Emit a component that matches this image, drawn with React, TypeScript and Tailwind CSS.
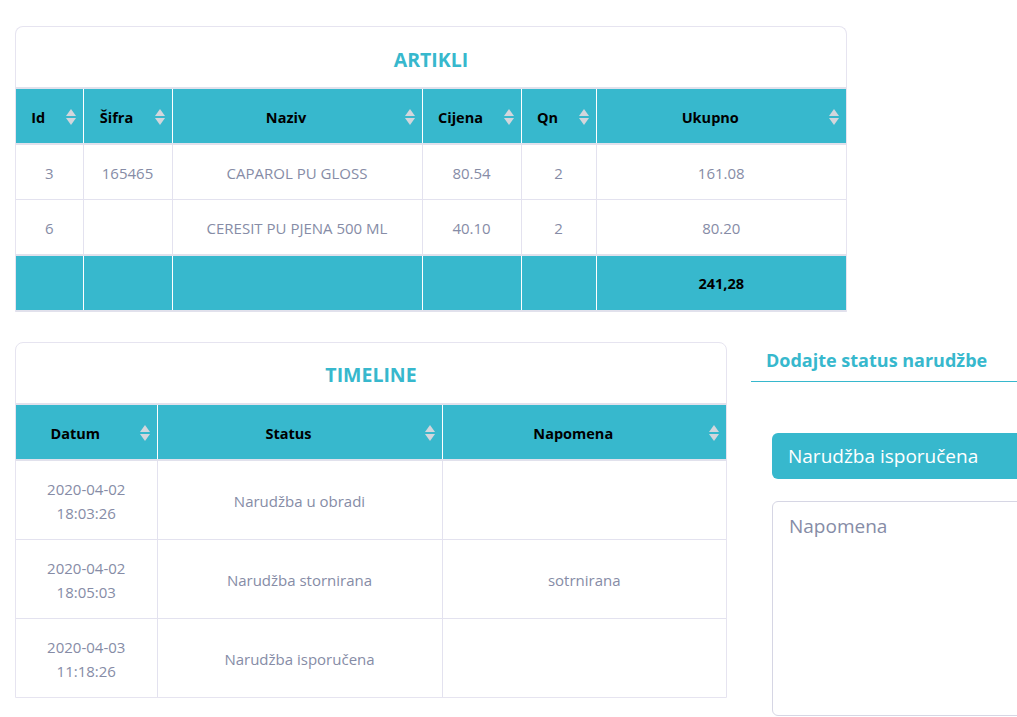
import React from "react";

const TEAL = "bg-[#37b8cd]";

function SortIcon() {
  return (
    <svg width="10" height="16" viewBox="0 0 10 16" className="shrink-0">
      <polygon points="5,0 10,7 0,7" fill="#d3d6dc" />
      <polygon points="0,9 10,9 5,16" fill="#d3d6dc" />
    </svg>
  );
}

function Th({ label, w }: { label: string; w: string }) {
  return (
    <th className={`${w} relative border-r border-white last:border-r-0 p-0 font-bold text-black text-[14.5px]`}>
      <div className="flex items-center h-[54px] pt-[3px] pl-[8px] pr-[30px]">
        <span className="flex-1 text-center">{label}</span>
      </div>
      <div className="absolute right-[7px] top-[20px]">
        <SortIcon />
      </div>
    </th>
  );
}

function Td({ children, last, h }: { children?: React.ReactNode; last?: boolean; h: string }) {
  return (
    <td className={`border-r border-[#e3e2ef] ${last ? "border-r-0" : ""} p-0 text-[15px] text-[#868ca6]`}>
      <div className={`${h} flex items-center justify-center text-center px-2 pt-[1px] leading-[24px]`}>
        <div>{children}</div>
      </div>
    </td>
  );
}

function Tf({ children, last }: { children?: React.ReactNode; last?: boolean }) {
  return (
    <td className={`${last ? "" : "border-r border-white"} p-0`}>
      <div className="h-[54px] pt-[2px] flex items-center justify-center font-bold text-[14.5px] text-black">
        {children}
      </div>
    </td>
  );
}

export default function App() {
  const font = { fontFamily: '"Open Sans", "Noto Sans", sans-serif' };
  const a = "h-[54px]";
  const t = "h-[78px]";
  return (
    <div className="w-[1017px] h-[717px] overflow-hidden bg-white" style={font}>
      <div className="w-[1100px] pl-[15px] pt-[26px]">
        {/* ARTIKLI */}
        <div className="w-[832px] border border-[#e6e4f0] border-b-0 rounded-t-[8px]">
          <div className="h-[60px] pt-[5px] flex items-center justify-center text-[19.5px] font-bold text-[#37b8cd]">
            ARTIKLI
          </div>
          <table className="w-full border-collapse table-fixed">
            <thead>
              <tr className={`${TEAL} border-t-2 border-b-2 border-[#e1e1ec]`}>
                <Th label="Id" w="w-[67px]" />
                <Th label="Šifra" w="w-[89px]" />
                <Th label="Naziv" w="w-[250px]" />
                <Th label="Cijena" w="w-[99px]" />
                <Th label="Qn" w="w-[75px]" />
                <Th label="Ukupno" w="" />
              </tr>
            </thead>
            <tbody>
              <tr className="border-b border-[#e3e2ef]">
                <Td h={a}>3</Td>
                <Td h={a}>165465</Td>
                <Td h={a}>CAPAROL PU GLOSS</Td>
                <Td h={a}>80.54</Td>
                <Td h={a}>2</Td>
                <Td h={a} last>161.08</Td>
              </tr>
              <tr>
                <Td h={a}>6</Td>
                <Td h={a}></Td>
                <Td h={a}>CERESIT PU PJENA 500 ML</Td>
                <Td h={a}>40.10</Td>
                <Td h={a}>2</Td>
                <Td h={a} last>80.20</Td>
              </tr>
              <tr className={`${TEAL} border-t-2 border-b-2 border-[#e1e1ec]`}>
                <Tf />
                <Tf />
                <Tf />
                <Tf />
                <Tf />
                <Tf last>241,28</Tf>
              </tr>
            </tbody>
          </table>
        </div>

        <div className="flex mt-[30px]">
          {/* TIMELINE */}
          <div className="w-[712px] shrink-0">
            <div className="border border-[#e6e4f0] rounded-t-[8px]">
              <div className="h-[60px] pt-[4px] flex items-center justify-center text-[19.5px] font-bold text-[#37b8cd]">
                TIMELINE
              </div>
              <table className="w-full border-collapse table-fixed">
                <thead>
                  <tr className={`${TEAL} border-t-2 border-b-2 border-[#e1e1ec]`}>
                    <Th label="Datum" w="w-[141px]" />
                    <Th label="Status" w="w-[285px]" />
                    <Th label="Napomena" w="" />
                  </tr>
                </thead>
                <tbody>
                  <tr className="border-b border-[#e3e2ef]">
                    <Td h={t}>2020-04-02<br />18:03:26</Td>
                    <Td h={t}>Narudžba u obradi</Td>
                    <Td h={t} last></Td>
                  </tr>
                  <tr className="border-b border-[#e3e2ef]">
                    <Td h={t}>2020-04-02<br />18:05:03</Td>
                    <Td h={t}>Narudžba stornirana</Td>
                    <Td h={t} last>sotrnirana</Td>
                  </tr>
                  <tr>
                    <Td h={t}>2020-04-03<br />11:18:26</Td>
                    <Td h={t}>Narudžba isporučena</Td>
                    <Td h={t} last></Td>
                  </tr>
                </tbody>
              </table>
            </div>
          </div>

          {/* Right panel */}
          <div className="ml-[24px] w-[330px] shrink-0">
            <div className="border-b border-[#37b8cd] pl-[15px] h-[40px] pb-[3px] flex items-center text-[18px] font-bold text-[#37b8cd]">
              Dodajte status narudžbe
            </div>
            <div className="pl-[21px] pt-[51px]">
              <div className="h-[46px] rounded-[6px] bg-[#37b8cd] text-white text-[19px] flex items-center px-[16px]">
                Narudžba isporučena
              </div>
              <textarea
                placeholder="Napomena"
                className="mt-[22px] block w-full h-[215px] border border-[#d6d6e4] rounded-[6px] px-[16px] pt-[10px] text-[19px] text-[#868ca6] placeholder:text-[#868ca6] resize-none outline-none"
              />
            </div>
          </div>
        </div>
      </div>
    </div>
  );
}
